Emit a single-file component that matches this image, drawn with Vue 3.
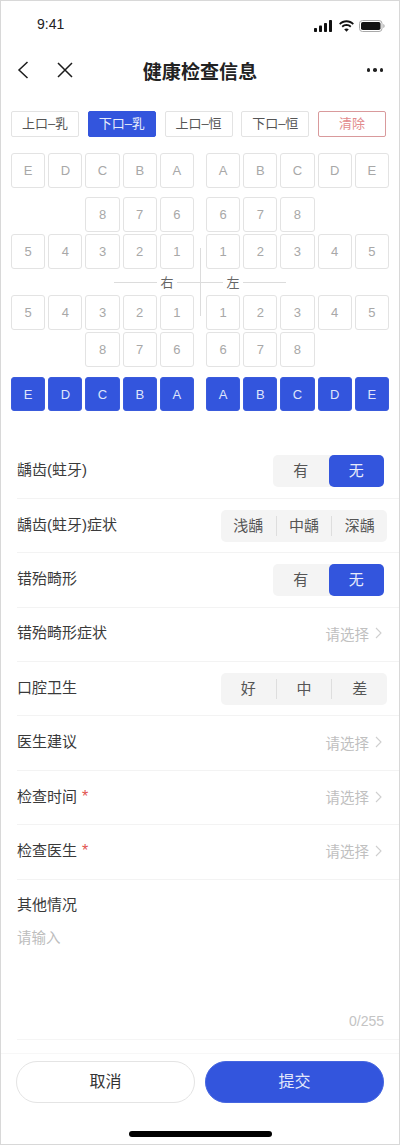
<script setup>
const upper = ['E', 'D', 'C', 'B', 'A']
const mid = ['8', '7', '6']
const nums = ['5', '4', '3', '2', '1']
const rev = (a) => [...a].reverse()
const tabs = [
  { t: '上口–乳' },
  { t: '下口–乳', cls: 'on' },
  { t: '上口–恒' },
  { t: '下口–恒' },
  { t: '清除', cls: 'clear' }
]
const rows = [
  { label: '龋齿(蛀牙)', type: 'two' },
  { label: '龋齿(蛀牙)症状', type: 'three', opts: ['浅龋', '中龋', '深龋'] },
  { label: '错殆畸形', type: 'two' },
  { label: '错殆畸形症状', type: 'pick' },
  { label: '口腔卫生', type: 'three', opts: ['好', '中', '差'] },
  { label: '医生建议', type: 'pick' },
  { label: '检查时间', type: 'pick', req: true },
  { label: '检查医生', type: 'pick', req: true }
]
const teethRows = [
  { l: upper, r: rev(upper), cls: '' },
  { l: mid, r: rev(mid), cls: 'short' },
  { l: nums, r: rev(nums), cls: 'tight' }
]
const lowerRows = [
  { l: nums, r: rev(nums), cls: 'short' },
  { l: mid, r: rev(mid), cls: 'tight' }
]
</script>

<template>
  <div class="page">
    <div class="status">
      <span class="time">9:41</span>
      <div class="status-icons">
        <svg width="19" height="12" viewBox="0 0 19 12"><rect x="0" y="8" width="3" height="4" rx="0.8" /><rect x="5" y="5.5" width="3" height="6.5" rx="0.8" /><rect x="10" y="3" width="3" height="9" rx="0.8" /><rect x="15" y="0" width="3" height="12" rx="0.8" /></svg>
        <svg width="17" height="12" viewBox="0 0 17 12"><path d="M8.5 2.2c2.4 0 4.6.9 6.2 2.5l1.2-1.3C13.9 1.400 11.300.300 8.500.300S3.100 1.400 1.100 3.400l1.200 1.300c1.600-1.600 3.800-2.500 6.200-2.500z" /><path d="M8.500 6c1.400 0 2.700.500 3.600 1.400l1.300-1.300C12.100 4.900 10.400 4.100 8.500 4.100s-3.600.800-4.900 2l1.300 1.300C5.800 6.500 7.100 6 8.500 6z" /><path d="M8.500 11.700l2.300-2.400c-.600-.600-1.400-.900-2.300-.900s-1.700.300-2.300.900z" /></svg>
        <svg width="26" height="12" viewBox="0 0 26 12"><rect x="0.500" y="0.500" width="22.500" height="11" rx="3" fill="none" stroke="#a9a9a9" /><rect x="2" y="2" width="19.500" height="8" rx="1.800" /><path d="M24.300 4v4c.8-.3 1.300-1.100 1.300-2s-.5-1.700-1.300-2z" fill="#a9a9a9" /></svg>
      </div>
    </div>

    <div class="nav">
      <div class="nav-left">
        <svg width="12" height="18" viewBox="0 0 12 18" fill="none" stroke="#1c1c1c" stroke-width="1.500"><path d="M10.500 1 2 9l8.500 8" /></svg>
        <svg width="16" height="16" viewBox="0 0 16 16" fill="none" stroke="#1c1c1c" stroke-width="1.500"><path d="M1 1l14 14M15 1 1 15" /></svg>
      </div>
      <div class="nav-title">健康检查信息</div>
      <div class="dots"><i></i><i></i><i></i></div>
    </div>

    <div class="tabs">
      <div v-for="t in tabs" :key="t.t" class="tab" :class="t.cls">{{ t.t }}</div>
    </div>

    <div class="chart">
      <div v-for="(row, i) in teethRows" :key="'u' + i" class="t-row" :class="row.cls">
        <div class="side left"><div v-for="(c, k) in row.l" :key="k" class="tooth">{{ c }}</div></div>
        <div class="side right"><div v-for="(c, k) in row.r" :key="k" class="tooth">{{ c }}</div></div>
      </div>

      <div class="cross-gap">
        <div class="cross">
          <span class="cross-v"></span>
          <span class="cross-h"></span>
          <span class="cross-t r">右</span>
          <span class="cross-t l">左</span>
        </div>
      </div>

      <div v-for="(row, i) in lowerRows" :key="'l' + i" class="t-row" :class="row.cls">
        <div class="side left"><div v-for="(c, k) in row.l" :key="k" class="tooth">{{ c }}</div></div>
        <div class="side right"><div v-for="(c, k) in row.r" :key="k" class="tooth">{{ c }}</div></div>
      </div>

      <div class="t-row blue">
        <div class="side left"><div v-for="(c, k) in upper" :key="k" class="tooth on">{{ c }}</div></div>
        <div class="side right"><div v-for="(c, k) in rev(upper)" :key="k" class="tooth on">{{ c }}</div></div>
      </div>
    </div>

    <div class="form">
      <div v-for="r in rows" :key="r.label" class="f-row">
        <div class="f-label">{{ r.label }}<span v-if="r.req" class="req">*</span></div>
        <div v-if="r.type === 'two'" class="seg two">
          <span class="seg-i">有</span>
          <span class="seg-i on">无</span>
        </div>
        <div v-else-if="r.type === 'three'" class="seg three">
          <span v-for="o in r.opts" :key="o" class="seg-i">{{ o }}</span>
        </div>
        <div v-else class="pick">
          <span>请选择</span>
          <svg width="7" height="12" viewBox="0 0 7 12" fill="none" stroke="#cfcfcf" stroke-width="1.100"><path d="M1 1l5 5-5 5" /></svg>
        </div>
      </div>

      <div class="other">
        <div class="f-label">其他情况</div>
        <div class="placeholder">请输入</div>
        <div class="count">0/255</div>
      </div>
    </div>

    <div class="footer">
      <div class="btn cancel">取消</div>
      <div class="btn submit">提交</div>
    </div>
    <div class="home"><span></span></div>
  </div>
</template>

<style>
html, body { margin: 0; background: #fff; }
</style>

<style scoped>
.page {
  width: 400px;
  height: 1145px;
  box-sizing: border-box;
  border: 1px solid #d8d8d8;
  background: #fff;
  font-family: "Liberation Sans", "Noto Sans CJK SC", sans-serif;
  color: #333;
  overflow: hidden;
}
.status {
  height: 43px;
  display: flex;
  align-items: flex-end;
  justify-content: space-between;
  padding: 0 14px 10px 36px;
  box-sizing: border-box;
}
.time { font-size: 14px; line-height: 17px; color: #222; transform: translateY(-1px); }
.status-icons { display: flex; align-items: center; gap: 4.500px; padding-bottom: 2px; }
.status-icons svg { fill: #111; display: block; }
.nav {
  height: 52px;
  display: flex;
  align-items: center;
  justify-content: space-between;
  padding: 0 16px 0 16px;
  position: relative;
}
.nav-left { display: flex; align-items: center; gap: 28px; }
.nav-title {
  position: absolute;
  left: 0;
  right: 0;
  text-align: center;
  font-size: 19px;
  font-weight: 700;
  color: #222;
  letter-spacing: 0.100px;
}
.dots { display: flex; gap: 3px; }
.dots i { width: 3.500px; height: 3.500px; border-radius: 50%; background: #222; display: block; }
.tabs {
  display: flex;
  justify-content: space-between;
  padding: 15px 13px 0 10px;
}
.tab {
  width: 68px;
  height: 26px;
  box-sizing: border-box;
  border: 1px solid #e3e3e3;
  border-radius: 2px;
  font-size: 13px;
  line-height: 24px;
  text-align: center;
  color: #555;
}
.tab.on { background: #3355dd; border-color: #3355dd; color: #e8ecfb; }
.tab.clear { border-color: #d99a9c; color: #e28a8c; }
.chart { padding: 16px 10px 0 10px; }
.t-row {
  display: flex;
  justify-content: space-between;
  margin-bottom: 9px;
  height: 35px;
}
.t-row.tight { margin-bottom: 0; }
.t-row.short { margin-bottom: 2px; }
.side { display: flex; gap: 3px; width: 183px; }
.side.left { justify-content: flex-end; }
.side.right { justify-content: flex-start; }
.tooth {
  width: 34.200px;
  height: 35px;
  box-sizing: border-box;
  border: 1px solid #e3e3e3;
  border-radius: 3px;
  color: #a8a8a8;
  font-size: 13px;
  line-height: 33px;
  text-align: center;
}
.tooth.on { height: 34px; background: #3355dd; border-color: #3a5bdc; color: #dfe5fb; }
.cross-gap { height: 26px; position: relative; }
.cross { position: absolute; inset: 0; }
.cross-v { position: absolute; left: 189px; top: -21px; width: 1px; height: 68px; background: #dcdcdc; }
.cross-h { position: absolute; left: 103px; top: 13px; width: 172px; height: 1px; background: #dcdcdc; }
.cross-t {
  position: absolute;
  top: 5px;
  width: 20px;
  background: #fff;
  text-align: center;
  font-size: 13px;
  line-height: 17px;
  color: #666;
}
.cross-t.r { left: 146px; }
.cross-t.l { left: 212px; }
.t-row.blue { margin-top: 10px; margin-bottom: 0; height: 34px; }
.form { padding: 4px 0 0 16px; margin-top: 29.500px; }
.f-row {
  height: 54.400px;
  display: flex;
  align-items: center;
  justify-content: space-between;
  box-sizing: border-box;
  border-bottom: 1px solid #f3f3f3;
  padding-right: 12px;
}
.f-label { font-size: 15px; color: #3a3a3a; line-height: 20px; transform: translateY(-1px); }
.req { color: #e2534f; margin-left: 5px; font-size: 16px; }
.seg {
  display: flex;
  background: #f4f4f4;
  border-radius: 5px;
  font-size: 15px;
  color: #555;
}
.seg.two { width: 111px; height: 32px; margin-right: 3px; }
.seg.two .seg-i { flex: 1; line-height: 32px; text-align: center; }
.seg.two .seg-i.on { background: #3355dd; color: #e8ecfb; border-radius: 5px; }
.seg.three { width: 166px; height: 32px; align-items: center; }
.seg.three .seg-i { flex: 1; line-height: 20px; text-align: center; }
.seg.three .seg-i + .seg-i { border-left: 1px solid #dedede; }
.pick {
  display: flex;
  align-items: center;
  gap: 6px;
  font-size: 14.500px;
  color: #c0c0c0;
  padding-right: 5px;
  transform: translateY(-1px);
}
.other {
  height: 160px;
  box-sizing: border-box;
  padding: 16px 15px 0 0;
  border-bottom: 1px solid #f5f5f5;
}
.placeholder { font-size: 14.500px; color: #bdbdbd; margin-top: 12px; line-height: 20px; }
.count { font-size: 14px; color: #c4c4c4; text-align: right; margin-top: 64px; line-height: 18px; }
.footer {
  margin-top: 13px;
  border-top: 1px solid #f7f7f7;
  padding: 7px 15px 0;
  display: flex;
  justify-content: space-between;
}
.btn {
  width: 179px;
  height: 42px;
  box-sizing: border-box;
  border-radius: 21px;
  text-align: center;
  font-size: 16px;
  line-height: 40px;
}
.cancel { border: 1px solid #e4e4e4; color: #333; }
.submit { background: #3355dd; border: 1px solid #4566e0; color: #e3e8fb; }
.home { display: flex; justify-content: center; padding-top: 28px; }
.home span { width: 143px; height: 6px; background: #000; border-radius: 3px; display: block; }
</style>
